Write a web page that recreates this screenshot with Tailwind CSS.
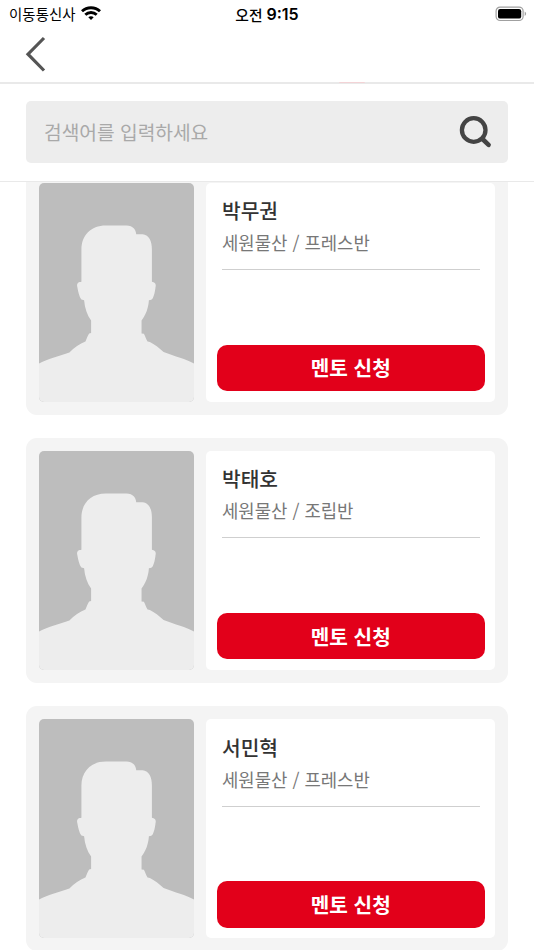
<!DOCTYPE html>
<html lang="ko">
<head>
    <meta charset="UTF-8" />
    <meta name="viewport" content="width=device-width, initial-scale=1" />
    <title>멘토 신청</title>
    <script src="https://cdn.jsdelivr.net/npm/@tailwindcss/browser@4"></script>
</head>
<body class="bg-white font-['Noto_Sans_CJK_KR',sans-serif]">

<!-- Silhouette shared by the cards -->
<svg class="hidden">
    <symbol id="person" viewBox="0 0 464 658" preserveAspectRatio="none">
        <path fill="#ededed" d="M-4 545C25 527 60 520 91 509C105 494 122 483 139 476C143 466 146 459 150 452L156 451V413C144 397 137 375 135 352L127 350C120 342 117 325 114 309C114 300 119 298 127 297V200C127 158 155 128 200 128H262C282 129 290 140 291 154H310C330 156 338 175 338 200V297C347 299 351 303 349 312C347 330 342 350 336 351L329 352C327 378 319 397 307 413V452L314 453C318 460 320 469 325 476L332 478C348 487 360 496 373 508C408 522 445 530 468 545V662H-4Z" />
    </symbol>
</svg>

<div class="flex flex-col h-[950px] overflow-hidden">
    <!-- Status bar -->
    <div class="grid grid-cols-3 items-center h-[27px] shrink-0 pl-[9px] pr-[7px] text-black">
        <div class="flex items-center gap-[5px]">
            <span class="-mt-[2px] text-[14.4px] leading-[27px] tracking-[0.1px]">이동통신사</span>
            <svg class="-mt-[2px] w-[20px] h-[14px]" viewBox="0 0 20 14" fill="none" stroke="#000" stroke-width="2.9">
                <path d="M1 5.2C6 .5 14 .5 19 5.2" />
                <path d="M4.3 8.7C7.5 5.7 12.5 5.7 15.7 8.7" />
                <path d="M10 14L7.3 11.3C8.8 9.9 11.2 9.9 12.7 11.3Z" fill="#000" stroke="none" />
            </svg>
        </div>
        <div class="flex justify-center items-center gap-[4px] -ml-[2px] whitespace-nowrap">
            <span class="text-[14.8px] leading-[27px] font-medium">오전</span>
            <span class="pt-[1px] font-['Inter',sans-serif] text-[16px] leading-[27px] font-semibold">9:15</span>
        </div>
        <div class="flex justify-end">
            <svg class="-mt-px w-[32px] h-[16px]" viewBox="0 0 32 16">
                <rect x="1.1" y="1.1" width="27" height="13.4" rx="4" fill="none" stroke="#a0a0a0" stroke-width="1.2" />
                <rect x="3" y="3" width="23.2" height="9.6" rx="2.2" fill="#000" />
                <path d="M29.7 5.6C31.6 6.4 31.6 9.2 29.7 10Z" fill="#a0a0a0" />
            </svg>
        </div>
    </div>

    <!-- Header -->
    <header class="relative h-[57px] shrink-0 border-b-2 border-[#e9e9e9] pl-[24px] pt-[9px]">
        <svg class="w-[24px] h-[37px]" viewBox="0 0 24 37" fill="none" stroke="#555" stroke-width="3.2">
            <path d="M20 2L4 18.2L20 34.5" />
        </svg>
        <div class="absolute left-[339px] bottom-[-1px] w-[26px] h-[1.5px] rounded-t-full bg-[#f3d3d6]"></div>
    </header>

    <!-- Search -->
    <div class="h-[98px] shrink-0 border-b border-[#e9e9e9] px-[26px] pt-[17px]">
        <div class="flex items-center justify-between h-[61.5px] rounded-[5px] bg-[#ededed] pl-[18px] pr-[16px]">
            <span class="pt-[2px] text-[19.2px] text-[#a9a9a9]">검색어를 입력하세요</span>
            <svg class="w-[34px] h-[34px]" viewBox="0 0 34 34" fill="none" stroke="#444" stroke-linecap="round">
                <circle cx="15.7" cy="15" r="11.8" stroke-width="4.3" />
                <path d="M24.5 24L30.6 29.8" stroke-width="4.6" />
            </svg>
        </div>
    </div>

    <!-- Mentor list -->
    <main class="flex-1 min-h-0 overflow-hidden px-[26px]">
        <div class="flex flex-col gap-[23.3px] -mt-[12.5px]">
            <div class="flex gap-[12px] h-[245px] shrink-0 rounded-[11px] bg-[#f4f4f4] p-[13px]">
                <svg class="w-[155px] h-[219px] rounded-[5px] bg-[#bdbdbd]"><use href="#person" /></svg>
                <div class="flex flex-col flex-1 rounded-[5px] bg-white pl-[11px] pr-[10.5px] pb-[10.5px]">
                    <div class="mx-[5px] h-[87.7px] border-b-[1.5px] border-[#cfcfcf] pt-[13.6px]">
                        <h2 class="text-[20.3px] leading-[28px] font-medium text-[#333]">박무권</h2>
                        <p class="mt-[4px] text-[17.8px] leading-[28px] text-[#777]">세원물산 / 프레스반</p>
                    </div>
                    <button class="mt-auto h-[46.3px] rounded-[10px] bg-[#e2001a] pt-px text-[20.2px] font-bold text-white">멘토 신청</button>
                </div>
            </div>

            <div class="flex gap-[12px] h-[245px] shrink-0 rounded-[11px] bg-[#f4f4f4] p-[13px]">
                <svg class="w-[155px] h-[219px] rounded-[5px] bg-[#bdbdbd]"><use href="#person" /></svg>
                <div class="flex flex-col flex-1 rounded-[5px] bg-white pl-[11px] pr-[10.5px] pb-[10.5px]">
                    <div class="mx-[5px] h-[87.7px] border-b-[1.5px] border-[#cfcfcf] pt-[13.6px]">
                        <h2 class="text-[20.3px] leading-[28px] font-medium text-[#333]">박태호</h2>
                        <p class="mt-[4px] text-[17.8px] leading-[28px] text-[#777]">세원물산 / 조립반</p>
                    </div>
                    <button class="mt-auto h-[46.3px] rounded-[10px] bg-[#e2001a] pt-px text-[20.2px] font-bold text-white">멘토 신청</button>
                </div>
            </div>

            <div class="flex gap-[12px] h-[245px] shrink-0 rounded-[11px] bg-[#f4f4f4] p-[13px]">
                <svg class="w-[155px] h-[219px] rounded-[5px] bg-[#bdbdbd]"><use href="#person" /></svg>
                <div class="flex flex-col flex-1 rounded-[5px] bg-white pl-[11px] pr-[10.5px] pb-[10.5px]">
                    <div class="mx-[5px] h-[87.7px] border-b-[1.5px] border-[#cfcfcf] pt-[13.6px]">
                        <h2 class="text-[20.3px] leading-[28px] font-medium text-[#333]">서민혁</h2>
                        <p class="mt-[4px] text-[17.8px] leading-[28px] text-[#777]">세원물산 / 프레스반</p>
                    </div>
                    <button class="mt-auto h-[46.3px] rounded-[10px] bg-[#e2001a] pt-px text-[20.2px] font-bold text-white">멘토 신청</button>
                </div>
            </div>
        </div>
    </main>
</div>

</body>
</html>
